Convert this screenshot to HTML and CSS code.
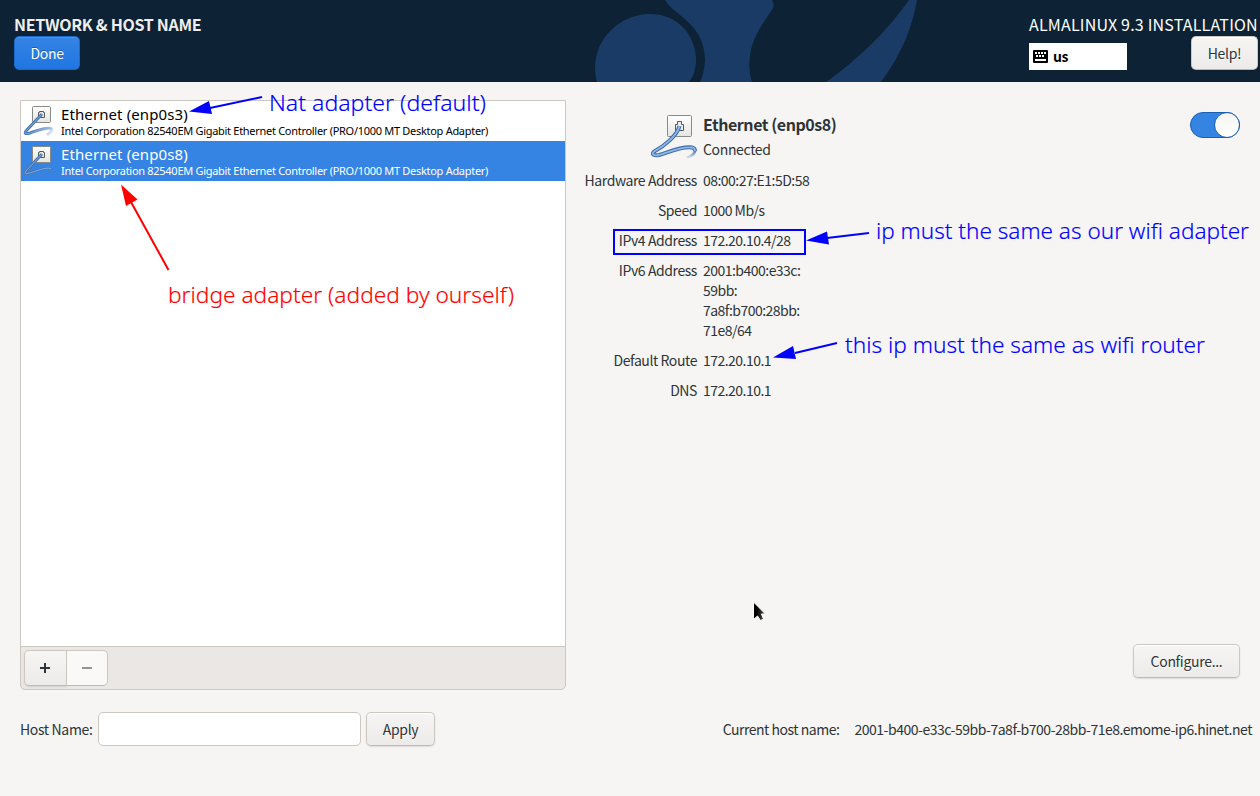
FILE: index.html
```
<!DOCTYPE html>
<html lang="en">
<head>
<meta charset="utf-8">
<title>Network &amp; Host Name</title>
<link rel="stylesheet" href="styles.css">
</head>
<body>
<svg class="defs" width="0" height="0" aria-hidden="true">
  <defs>
    <linearGradient id="plate" x1="0" y1="0" x2="0" y2="1"><stop offset="0" stop-color="#fff"/><stop offset="1" stop-color="#e4e4e2"/></linearGradient>
    <linearGradient id="cordTail" gradientUnits="userSpaceOnUse" x1="0" y1="38" x2="0" y2="47"><stop offset="0" stop-color="#3f6fae"/><stop offset="1" stop-color="#3f6fae" stop-opacity="0"/></linearGradient>
    <linearGradient id="cordSmall" gradientUnits="userSpaceOnUse" x1="16" y1="20" x2="27" y2="31"><stop offset="0" stop-color="#4877b3"/><stop offset="1" stop-color="#4877b3" stop-opacity="0.1"/></linearGradient>
    <linearGradient id="arrowFill" x1="0" y1="0" x2="1" y2="0"><stop offset="0.3" stop-color="#000"/><stop offset="1" stop-color="#666"/></linearGradient>
    <symbol id="wired" viewBox="0 0 48 48">
      <rect x="16.500" y="3.500" width="24" height="21" rx="1" fill="url(#plate)" stroke="#888a85"/>
      <path d="M24.500 18.500v-6h2v-3h4v3h2v6z" fill="#eee" stroke="#555753"/>
      <path d="M44 38C44.500 42 41 44 36 46" fill="none" stroke="url(#cordTail)" stroke-width="3"/>
      <path d="M28.500 14C26 24 13 34 4 39C-1 42 3 44 8 43C18 40 31 34 41 35.500Q44 36 44 39" fill="none" stroke="#3f6fae" stroke-width="4"/>
      <path d="M28.500 14C26 24 13 34 4 39C-1 42 3 44 8 43C18 40 31 34 41 35.500Q44 36 44 39" fill="none" stroke="#8fb6e6" stroke-width="1.800"/>
    </symbol>
    <symbol id="wired-small" viewBox="0 0 32 32">
      <rect x="9.500" y="1.500" width="18" height="16" rx="1" fill="url(#plate)" stroke="#888a85"/>
      <path d="M15.500 12.500v-5h1v-1h4v1h1v5z" fill="#eee" stroke="#555753"/>
      <path d="M19 9L3 26C1 29 3 29 7 28C14 26 22 22 28 23.500C31 25 27 28 24 30" fill="none" stroke="url(#cordSmall)" stroke-width="3"/>
      <path d="M19 9L3 26C1 29 3 29 7 28C14 26 22 22 28 23.500" fill="none" stroke="#8fb3df" stroke-opacity=".8" stroke-width="1"/>
    </symbol>
  </defs>
</svg>

<header class="banner">
  <svg class="banner-art" viewBox="0 0 340 82" aria-hidden="true">
    <path d="M17 82C7 45 37 14 70 14C101 14 117 39 116 63C115 71 113 77 109 82Z"/>
    <path d="M85 0C95 17 125 23 125 61Q124 74 120 82H172Q167 67 171 50C175 33 184 22 192 10Q195 5 192 0Z"/>
    <path d="M246 82C279 59 307 31 329 0H337C332 29 321 55 301 82Z"/>
  </svg>
  <div class="banner-left">
    <h1 class="page-title">NETWORK &amp; HOST NAME</h1>
    <button class="btn btn-primary">Done</button>
  </div>
  <div class="banner-right">
    <div class="product">ALMALINUX 9.3 INSTALLATION</div>
    <div class="banner-tools">
      <div class="layout-box">
        <svg width="15" height="13" viewBox="0 0 15 13" aria-hidden="true"><rect width="15" height="13" rx="1"/><path d="M2 3h2M5 3h2M8 3h2M11 3h2M3 6h2M6 6h2M9 6h2M2 10h11" stroke="#fff" stroke-width="2"/></svg>
        <span class="layout-name">us</span>
      </div>
      <button class="btn btn-help">Help!</button>
    </div>
  </div>
</header>

<main class="content">
  <section class="device-panel">
    <ul class="device-list">
      <li class="device">
        <svg class="device-icon" width="32" height="32"><use href="#wired-small"/></svg>
        <div><div class="device-name">Ethernet (enp0s3)</div><div class="device-desc">Intel Corporation 82540EM Gigabit Ethernet Controller (PRO/1000 MT Desktop Adapter)</div></div>
      </li>
      <li class="device selected">
        <svg class="device-icon" width="32" height="32"><use href="#wired-small"/></svg>
        <div><div class="device-name">Ethernet (enp0s8)</div><div class="device-desc">Intel Corporation 82540EM Gigabit Ethernet Controller (PRO/1000 MT Desktop Adapter)</div></div>
      </li>
    </ul>
    <div class="toolbar">
      <button class="tool" aria-label="Add"><svg width="10" height="10"><path d="M5 0v10M0 5h10" stroke="#2e3436" stroke-width="2"/></svg></button>
      <button class="tool disabled" aria-label="Remove"><svg width="10" height="10"><path d="M0 5h10" stroke="#929595" stroke-width="2"/></svg></button>
    </div>
  </section>

  <section class="details">
    <div class="summary">
      <svg class="summary-icon" width="48" height="48"><use href="#wired"/></svg>
      <div class="summary-text"><h2 class="summary-name">Ethernet (enp0s8)</h2><div class="summary-state">Connected</div></div>
      <div class="switch" role="switch" aria-checked="true"><span class="knob"></span></div>
    </div>
    <dl class="facts">
      <dt>Hardware Address</dt><dd>08:00:27:E1:5D:58</dd>
      <dt>Speed</dt><dd>1000 Mb/s</dd>
      <dt>IPv4 Address</dt><dd>172.20.10.4/28</dd>
      <dt>IPv6 Address</dt><dd>2001:b400:e33c:<br>59bb:<br>7a8f:b700:28bb:<br>71e8/64</dd>
      <dt>Default Route</dt><dd>172.20.10.1</dd>
      <dt>DNS</dt><dd>172.20.10.1</dd>
    </dl>
    <button class="btn btn-configure">Configure...</button>
  </section>
</main>

<footer class="hostbar">
  <label class="host-label" for="host">Host Name:</label>
  <input class="host-input" id="host" type="text">
  <button class="btn btn-apply">Apply</button>
  <div class="current"><span>Current host name:</span><span class="current-name">2001-b400-e33c-59bb-7a8f-b700-28bb-71e8.emome-ip6.hinet.net</span></div>
</footer>

<svg class="notes" width="1260" height="796" viewBox="0 0 1260 796">
  <g class="note-blue">
    <path class="line" d="M262 97L210 108M869 233L827 238M837 343L795 353"/>
    <path d="M189 111.500L209 101L212 114ZM806 240.500L827 231.500L829 244.500ZM773 357.500L793 346L796 359Z"/>
    <rect class="frame" x="614" y="230" width="191" height="24"/>
    <text x="269" y="110.500" textLength="217" lengthAdjust="spacingAndGlyphs">Nat adapter (default)</text>
    <text x="876" y="239" textLength="373" lengthAdjust="spacingAndGlyphs">ip must the same as our wifi adapter</text>
    <text x="845" y="353" textLength="360" lengthAdjust="spacingAndGlyphs">this ip must the same as wifi router</text>
  </g>
  <g class="note-red">
    <path class="line" d="M168.500 270L131 202"/>
    <path d="M121 184.500L137.500 199.500L126 206Z"/>
    <text x="168" y="303" textLength="346" lengthAdjust="spacingAndGlyphs">bridge adapter (added by ourself)</text>
  </g>
  <path d="M753.500 602V619.500L757.500 616L760.500 620.500L763.500 619L761.500 614H765.500Z" fill="url(#arrowFill)" stroke="#fff"/>
</svg>
</body>
</html>
```
FILE: styles.css
```
* { box-sizing: border-box; }
body {
  margin: 0;
  width: 1260px;
  height: 796px;
  overflow: hidden;
  display: flex;
  flex-direction: column;
  background: #f6f5f4;
  color: #2e3436;
  font: 14px/20px "Noto Sans CJK TC", "Noto Sans", sans-serif;
  white-space: nowrap;
}
h1, h2, ul, dl, dd { margin: 0; padding: 0; }
svg { display: block; }
.defs { position: absolute; }

.banner { position: relative; height: 82px; background: #0d2234; color: #fff; display: flex; justify-content: space-between; }
.banner-art { position: absolute; left: 580px; top: 0; width: 340px; height: 82px; fill: #193b66; }
.banner-left { padding: 13px 0 0 14px; }
.page-title { font-size: 16px; line-height: 23px; font-weight: 700; color: #eeeeec; letter-spacing: -0.31px; }
.banner-right { width: 231px; padding: 13px 2px 0 0; }
.product { font-size: 16px; line-height: 23px; letter-spacing: 0.19px; }
.banner-tools { display: flex; justify-content: space-between; }
.layout-box { width: 98px; height: 27px; margin-top: 7px; background: #fff; color: #000; display: flex; align-items: center; gap: 5px; padding-left: 4px; font-weight: 700; }
.layout-name { margin-top: -2px; letter-spacing: -0.5px; }

.btn {
  height: 34px;
  padding: 0;
  border: 1px solid #cdc7c2;
  border-bottom-color: #bfb8b1;
  border-radius: 5px;
  background: linear-gradient(to top, #edebe9, #f6f5f4);
  box-shadow: inset 0 1px #fff, 0 1px 2px rgba(0, 0, 0, 0.1);
  color: #2e3436;
  font: inherit;
  letter-spacing: -0.3px;
  text-shadow: 0 1px #fff;
}
.btn-primary { display: block; width: 66px; background: linear-gradient(to top, #1f76e1, #3584e4); border-color: #1b6acb; box-shadow: inset 0 1px #4d94e8; color: #fff; text-shadow: 0 -1px rgba(0, 0, 0, 0.3); }
.btn-help { width: 67px; }

.content { height: 608px; padding: 18px 20px 0; display: flex; }
.device-panel { width: 546px; height: 590px; display: flex; flex-direction: column; border: 1px solid #cdc7c2; border-radius: 0 0 5px 5px; overflow: hidden; background: #ebe7e5; }
.device-list { flex: 1; list-style: none; background: #fff; color: #000; font-family: "Noto Sans", sans-serif; }
.device { height: 40px; display: flex; padding-left: 2px; gap: 6px; }
.device-icon { margin-top: 4px; }
.device-name { font-size: 15px; line-height: 20px; margin-top: 3px; letter-spacing: 0.1px; }
.device-desc { font-size: 11px; line-height: 13px; letter-spacing: -0.29px; }
.selected { background: #3584e4; color: #fff; }
.toolbar { height: 43px; border-top: 1px solid #cdc7c2; padding: 3px; display: flex; }
.tool { width: 43px; height: 36px; padding: 0 2px 0 0; display: flex; align-items: center; justify-content: center; border: 1px solid #cdc7c2; border-bottom-color: #bfb8b1; border-radius: 5px 0 0 5px; background: linear-gradient(to top, #edebe9, #f6f5f4); box-shadow: 0 1px 2px rgba(0, 0, 0, 0.1); }
.tool.disabled { width: 41px; padding: 0; border-left: 0; border-radius: 0 5px 5px 0; background: #faf9f8; box-shadow: none; }

.details { flex: 1; display: flex; flex-direction: column; padding: 12px 0 12px 18px; }
.summary { display: flex; height: 58px; }
.summary-icon { margin-left: 67px; }
.summary-text { flex: 1; margin-left: 4px; }
.summary-name { font-size: 16px; line-height: 24px; font-weight: 700; letter-spacing: -0.45px; }
.summary-state { margin-top: 3px; letter-spacing: -0.35px; }
.switch { width: 50px; height: 26px; border: 1px solid #185fb4; border-radius: 13px; background: #3584e4; display: flex; justify-content: flex-end; }
.knob { width: 26px; height: 26px; margin: -1px -1px 0 0; border: 1px solid #185fb4; border-radius: 50%; background: linear-gradient(#f6f5f4, #fff); }
.facts { display: grid; grid-template-columns: 113px auto; column-gap: 6px; row-gap: 10px; letter-spacing: -0.52px; }
.facts dt { text-align: right; letter-spacing: -0.42px; }
.btn-configure { width: 107px; margin-top: auto; align-self: flex-end; }

.hostbar { display: flex; align-items: center; height: 34px; margin-top: 22px; padding: 0 8px 0 20px; }
.host-label { width: 78px; letter-spacing: -0.35px; }
.host-input { width: 263px; height: 34px; margin-right: 5px; border: 1px solid #cdc7c2; border-radius: 5px; background: #fff; }
.btn-apply { width: 69px; }
.current { margin-left: auto; display: flex; gap: 15px; letter-spacing: -0.48px; }

.notes { position: absolute; left: 0; top: 0; pointer-events: none; font: 300 22px "Noto Sans", sans-serif; }
.note-blue { fill: #00f; }
.note-red { fill: #f00; }
.notes .line, .notes .frame { fill: none; stroke: #00f; stroke-width: 2; }
.notes .note-red .line { stroke: #f00; }
.note-blue text { stroke: #00f; stroke-width: 0.15; }
.note-red text { stroke: #f00; stroke-width: 0.15; }
```
